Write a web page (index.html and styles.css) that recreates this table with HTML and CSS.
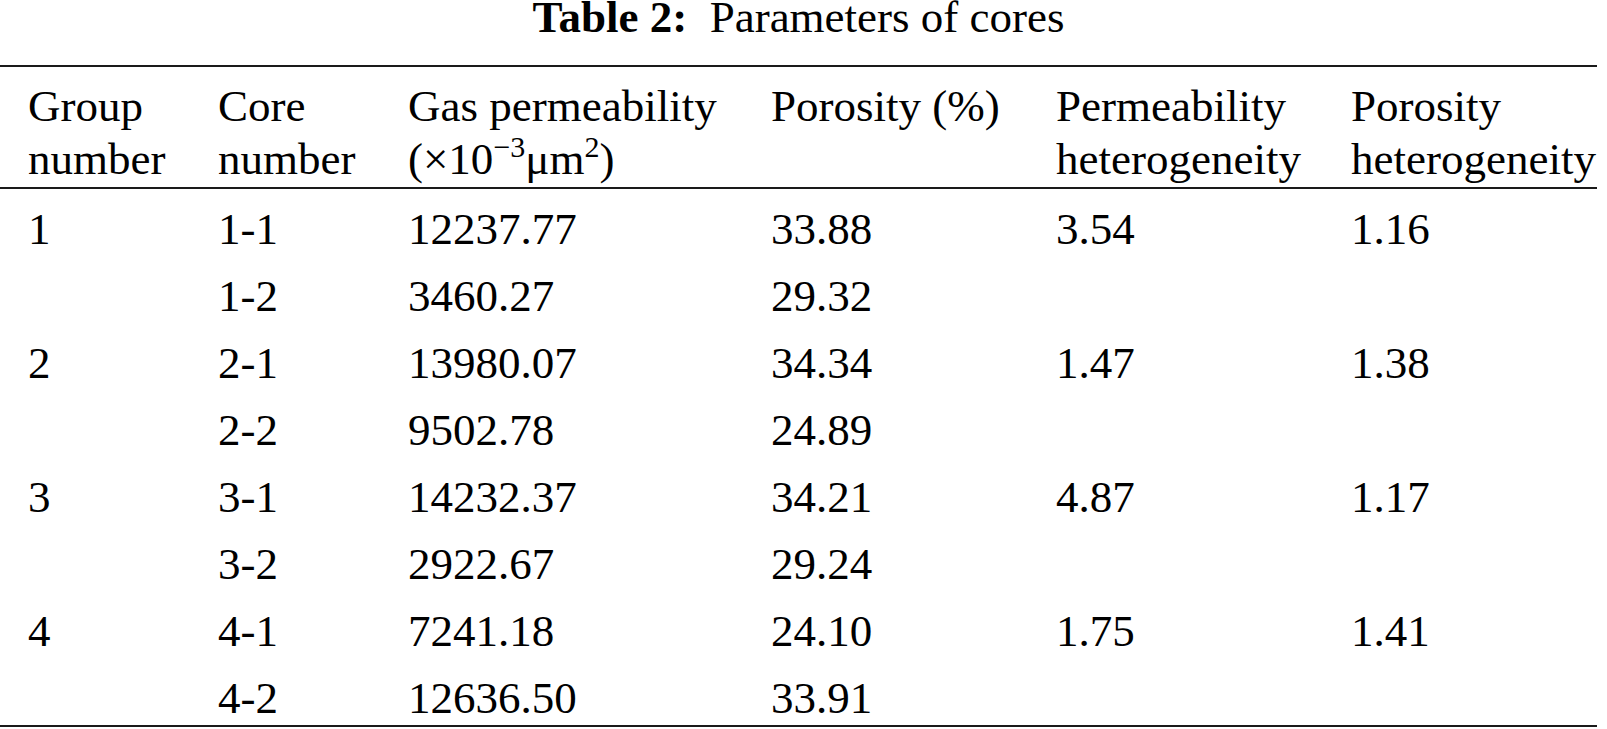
FILE: index.html
```html
<!DOCTYPE html>
<html lang="en">
<head>
<meta charset="utf-8">
<title>Table 2: Parameters of cores</title>
<link rel="stylesheet" href="styles.css">
</head>
<body>
<div class="wrap">
  <div class="caption"><b>Table 2:</b>&nbsp; Parameters of cores</div>
  <table class="data">
    <colgroup>
      <col class="c1"><col class="c2"><col class="c3"><col class="c4"><col class="c5"><col class="c6">
    </colgroup>
    <thead>
      <tr>
        <th>Group<br>number</th>
        <th>Core<br>number</th>
        <th>Gas permeability<br>(×10<sup>−3</sup>μm<sup>2</sup>)</th>
        <th>Porosity (%)</th>
        <th>Permeability<br>heterogeneity</th>
        <th>Porosity<br>heterogeneity</th>
      </tr>
    </thead>
    <tbody>
      <tr><td>1</td><td>1-1</td><td>12237.77</td><td>33.88</td><td>3.54</td><td>1.16</td></tr>
      <tr><td></td><td>1-2</td><td>3460.27</td><td>29.32</td><td></td><td></td></tr>
      <tr><td>2</td><td>2-1</td><td>13980.07</td><td>34.34</td><td>1.47</td><td>1.38</td></tr>
      <tr><td></td><td>2-2</td><td>9502.78</td><td>24.89</td><td></td><td></td></tr>
      <tr><td>3</td><td>3-1</td><td>14232.37</td><td>34.21</td><td>4.87</td><td>1.17</td></tr>
      <tr><td></td><td>3-2</td><td>2922.67</td><td>29.24</td><td></td><td></td></tr>
      <tr><td>4</td><td>4-1</td><td>7241.18</td><td>24.10</td><td>1.75</td><td>1.41</td></tr>
      <tr class="last"><td></td><td>4-2</td><td>12636.50</td><td>33.91</td><td></td><td></td></tr>
    </tbody>
  </table>
</div>
</body>
</html>
```
FILE: styles.css
```css
html, body {
  margin: 0;
  padding: 0;
  background: #ffffff;
}

.wrap {
  width: 1597px;
  font-family: "Liberation Serif", "Times New Roman", serif;
  font-size: 45px;
  color: #000000;
}

.caption {
  text-align: center;
  line-height: 34px;
  margin-bottom: 31px;
  white-space: nowrap;
}

.caption b {
  font-weight: bold;
}

.data {
  width: 1597px;
  table-layout: fixed;
  border-collapse: separate;
  border-spacing: 0;
}

.c1 { width: 218px; }
.c2 { width: 190px; }
.c3 { width: 363px; }
.c4 { width: 285px; }
.c5 { width: 295px; }
.c6 { width: 246px; }

.data th {
  font-weight: normal;
  text-align: left;
  vertical-align: top;
  line-height: 53px;
  padding: 13px 0 1px 0;
  border-top: 2px solid #1a1a1a;
  border-bottom: 2px solid #1a1a1a;
  white-space: nowrap;
}

.data td {
  text-align: left;
  vertical-align: top;
  line-height: 46px;
  height: 46px;
  padding: 17px 0 4px 0;
  white-space: nowrap;
}

.data th:first-child,
.data td:first-child {
  padding-left: 28px;
}

.data tr.last td {
  border-bottom: 2px solid #1a1a1a;
}

.data sup {
  font-size: 30px;
  line-height: 0;
  vertical-align: 0;
  position: relative;
  top: -17px;
}
```
